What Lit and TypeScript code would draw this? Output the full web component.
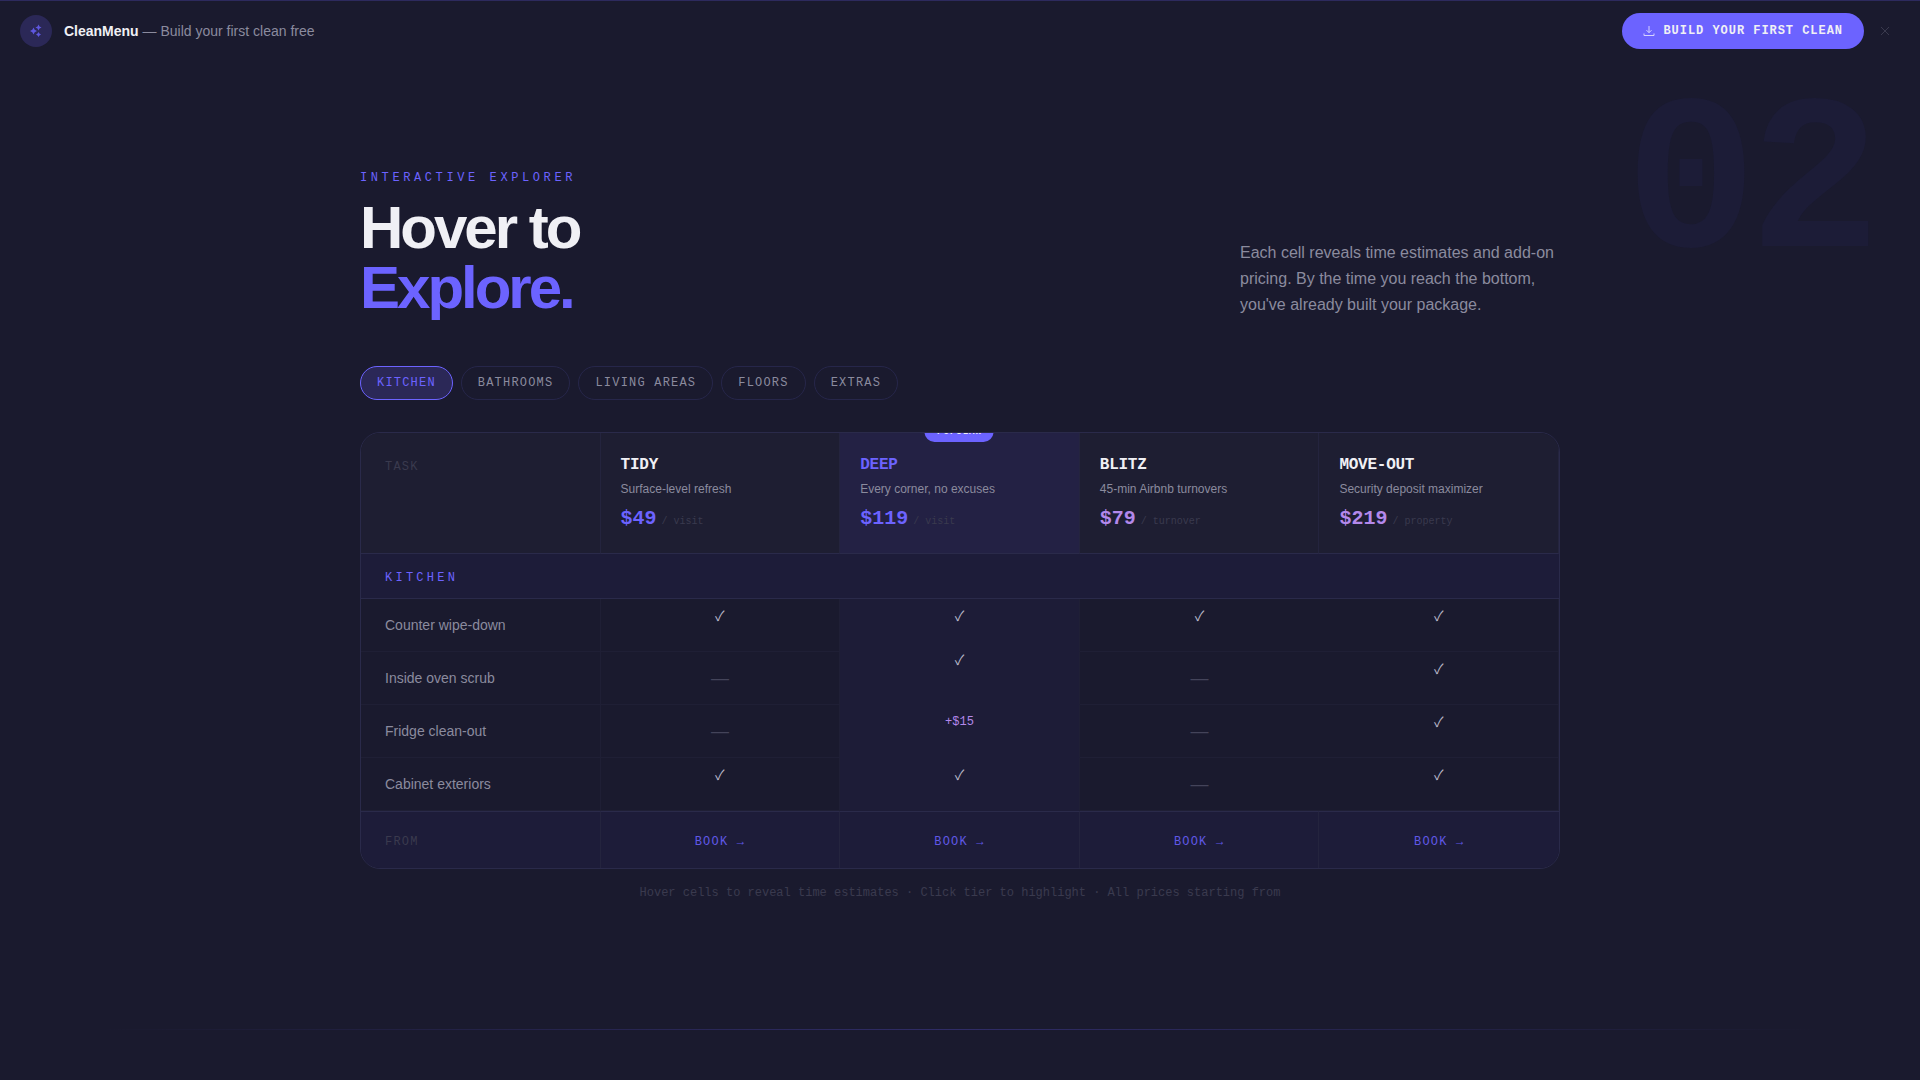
import { css, html, LitElement, nothing } from "lit";
import { customElement } from "lit/decorators.js";

type Mark = "yes" | "no" | string;

interface Tier {
  name: string;
  blurb: string;
  price: string;
  unit: string;
  lilac?: boolean;
  featured?: boolean;
}

const TIERS: Tier[] = [
  { name: "TIDY", blurb: "Surface-level refresh", price: "$49", unit: "/ visit" },
  { name: "DEEP", blurb: "Every corner, no excuses", price: "$119", unit: "/ visit", featured: true },
  { name: "BLITZ", blurb: "45-min Airbnb turnovers", price: "$79", unit: "/ turnover", lilac: true },
  { name: "MOVE-OUT", blurb: "Security deposit maximizer", price: "$219", unit: "/ property", lilac: true },
];

const ROWS: { task: string; marks: Mark[] }[] = [
  { task: "Counter wipe-down", marks: ["yes", "yes", "yes", "yes"] },
  { task: "Inside oven scrub", marks: ["no", "yes", "no", "yes"] },
  { task: "Fridge clean-out", marks: ["no", "+$15", "no", "yes"] },
  { task: "Cabinet exteriors", marks: ["yes", "yes", "no", "yes"] },
];

const TABS = ["KITCHEN", "BATHROOMS", "LIVING AREAS", "FLOORS", "EXTRAS"];

@customElement("app-root")
export class AppRoot extends LitElement {
  static override properties = {
    activeTab: { state: true },
  };

  declare activeTab: string;

  constructor() {
    super();
    this.activeTab = "KITCHEN";
  }

  static override styles = css`
    :host {
      display: block;
      position: relative;
      min-height: 1080px;
      overflow: hidden;
      background: #1a1a2e;
      color: #f0f0f5;
      font-family: "Liberation Sans", Arial, sans-serif;
    }

    .mono {
      font-family: "Liberation Mono", "Courier New", monospace;
    }

    .banner {
      position: relative;
      display: flex;
      align-items: center;
      height: 61px;
      padding: 0 20px;
      box-sizing: border-box;
      border-top: 1px solid #2d2a5e;
    }

    .logo {
      display: flex;
      align-items: center;
      justify-content: center;
      width: 32px;
      height: 32px;
      margin-right: 12px;
      border-radius: 50%;
      background: #2b2857;
      color: #5f57e0;
    }

    .logo svg {
      width: 16px;
      height: 16px;
      fill: currentColor;
    }

    .banner-text {
      flex: 1;
      font-size: 14px;
      color: #8b8b9e;
    }

    .banner-text b {
      color: #f0f0f5;
      font-weight: 700;
    }

    .cta {
      display: flex;
      align-items: center;
      gap: 8px;
      height: 36px;
      padding: 0 21px;
      border: none;
      border-radius: 18px;
      background: #6c63ff;
      color: #f0f0f5;
      font-size: 12px;
      font-weight: 700;
      letter-spacing: 0.08em;
      margin-right: 15px;
    }

    .cta svg {
      width: 12px;
      height: 12px;
      fill: none;
      stroke: #d5d2ff;
      stroke-width: 1;
    }

    .close {
      width: 12px;
      height: 12px;
      fill: none;
      stroke: #3a3a4e;
      stroke-width: 1;
      margin-right: 9px;
    }

    .ghost {
      position: absolute;
      top: 78px;
      right: 47px;
      font-size: 220px;
      line-height: 220px;
      font-weight: 700;
      letter-spacing: -8px;
      color: #1c1c37;
    }

    main {
      position: relative;
      width: 1200px;
      margin: 0 auto;
      padding-top: 110px;
    }

    .intro {
      display: flex;
      justify-content: space-between;
      align-items: flex-end;
    }

    .eyebrow {
      font-size: 12px;
      line-height: 14px;
      letter-spacing: 0.3em;
      color: #6c63ff;
      margin-bottom: 13px;
    }

    h1 {
      margin: 0;
      font-size: 60px;
      line-height: 60px;
      font-weight: 700;
      letter-spacing: -0.05em;
      color: #f0f0f5;
    }

    h1 span {
      display: block;
      color: #6c63ff;
    }

    .lede {
      width: 320px;
      margin: 0;
      font-size: 16px;
      line-height: 26px;
      color: #8b8b9e;
    }

    .tabs {
      display: flex;
      gap: 8px;
      margin: 48px 0 32px;
    }

    .tab {
      height: 34px;
      padding: 0 16px;
      border: 1px solid #26264a;
      border-radius: 17px;
      background: transparent;
      color: #8b8b9e;
      font-size: 12px;
      letter-spacing: 0.1em;
    }

    .tab.on {
      border-color: #6c63ff;
      background: #2b2857;
      color: #6c63ff;
    }

    .matrix {
      display: grid;
      grid-template-columns: repeat(5, 1fr);
      grid-template-rows: 121px 45px repeat(4, 53px) 57px;
      border: 1px solid #2a2a4a;
      border-radius: 20px;
      overflow: hidden;
    }

    .head {
      position: relative;
      padding: 23px 20px 0;
      background: #1e1e32;
      border-right: 1px solid #24243e;
      border-bottom: 1px solid #2a2a4a;
      min-width: 0;
    }

    .head.first {
      padding: 27px 24px 0;
      font-size: 12px;
      line-height: 14px;
      letter-spacing: 0.1em;
      color: #3a3a4e;
    }

    .head.featured {
      background: #232144;
    }

    .head:last-of-type {
      border-right: none;
    }

    .badge {
      position: absolute;
      top: -12px;
      left: 50%;
      transform: translateX(-50%);
      width: 69px;
      height: 21px;
      border-radius: 0 0 10px 10px;
      background: #6c63ff;
      color: #f0f0f5;
      font-size: 9px;
      line-height: 22px;
      font-weight: 700;
      letter-spacing: 1px;
      text-align: center;
    }

    .tier-name {
      font-size: 16px;
      line-height: 18px;
      font-weight: 700;
      letter-spacing: -0.25px;
      color: #f0f0f5;
    }

    .featured .tier-name {
      color: #6c63ff;
    }

    .blurb {
      margin-top: 7px;
      font-size: 12px;
      line-height: 16px;
      color: #8b8b9e;
    }

    .price-line {
      display: flex;
      align-items: baseline;
      gap: 5px;
      margin-top: 9px;
    }

    .price {
      font-size: 20px;
      line-height: 26px;
      font-weight: 700;
      color: #6c63ff;
    }

    .lilac .price {
      color: #b388eb;
    }

    .unit {
      font-size: 10px;
      color: #3a3a4e;
    }

    .section {
      grid-column: 1 / -1;
      display: flex;
      align-items: center;
      padding: 3px 24px 0;
      background: #1d1c39;
      border-bottom: 1px solid #2a2a4a;
      font-size: 12px;
      letter-spacing: 0.27em;
      color: #6c63ff;
    }

    .task {
      display: flex;
      align-items: center;
      padding: 0 24px;
      font-size: 14px;
      color: #8b8b9e;
      border-right: 1px solid #1f1f35;
      border-bottom: 1px solid #1f1f35;
    }

    .cell {
      display: flex;
      flex-direction: column;
      align-items: center;
      border-right: 1px solid #1f1f35;
      border-bottom: 1px solid #1f1f35;
    }

    .cell.featured {
      background: #1d1c37;
      border-bottom-color: #1d1c37;
    }

    .cell:nth-child(5n) {
      border-right: none;
    }

    .check {
      height: 14px;
      margin-top: 9px;
      font-family: "Noto Sans CJK JP", sans-serif;
      font-size: 14px;
      line-height: 14px;
      color: #b8b8c8;
    }

    .check.early {
      margin-top: 0;
    }

    .dash {
      margin-top: 16px;
      font-size: 18px;
      line-height: 20px;
      color: #44445a;
    }

    .addon {
      margin-top: 10px;
      font-size: 12px;
      line-height: 14px;
      color: #b388eb;
    }

    .foot {
      display: flex;
      align-items: center;
      justify-content: center;
      padding-top: 3px;
      background: #1d1c39;
      border-top: 1px solid #2a2a4a;
      border-right: 1px solid #24243e;
      font-size: 12px;
      letter-spacing: 0.1em;
      color: #6058e6;
    }

    .foot.first {
      justify-content: flex-start;
      padding: 3px 24px 0;
      color: #3a3a4e;
    }

    .foot:last-child {
      border-right: none;
    }

    .note {
      margin-top: 17px;
      font-size: 12px;
      line-height: 14px;
      text-align: center;
      color: #3a3a4e;
    }

    .rule {
      position: absolute;
      left: 96px;
      right: 96px;
      top: 1029px;
      height: 1px;
      background: linear-gradient(90deg, transparent, #2f2c66, transparent);
    }
  `;

  private renderTier(tier: Tier) {
    const classes = `head ${tier.featured ? "featured" : ""} ${tier.lilac ? "lilac" : ""}`;
    return html`
      <div class="${classes}">
        ${tier.featured ? html`<div class="badge mono">POPULAR</div>` : nothing}
        <div class="tier-name mono">${tier.name}</div>
        <div class="blurb">${tier.blurb}</div>
        <div class="price-line">
          <span class="price mono">${tier.price}</span>
          <span class="unit mono">${tier.unit}</span>
        </div>
      </div>
    `;
  }

  private renderMark(mark: Mark, rowIndex: number, col: number) {
    if (mark === "yes") {
      const early = !!TIERS[col].featured && rowIndex === 1;
      return html`<span class="check ${early ? "early" : ""}">✓</span>`;
    }
    if (mark === "no") return html`<span class="dash">—</span>`;
    return html`<span class="addon mono">${mark}</span>`;
  }

  override render() {
    return html`
      <div class="banner">
        <div class="logo">
          <svg viewBox="0 0 16 16">
            <path d="M5.5 4.5l1.2 2.3 2.3 1.2-2.3 1.2-1.2 2.3-1.2-2.3L2 8l2.3-1.2z"></path>
            <path d="M10.5 1.5l1 2 2 1-2 1-1 2-1-2-2-1 2-1z"></path>
            <path d="M10.5 9l.9 1.6 1.6.9-1.6.9-.9 1.6-.9-1.6-1.6-.9 1.6-.9z"></path>
          </svg>
        </div>
        <div class="banner-text"><b>CleanMenu</b> — Build your first clean free</div>
        <button class="cta mono">
          <svg viewBox="0 0 12 12">
            <path d="M6 1v6.5M3.5 5.2 6 7.7l2.5-2.5M1 8.5v2h10v-2"></path>
          </svg>
          BUILD YOUR FIRST CLEAN
        </button>
        <svg class="close" viewBox="0 0 12 12"><path d="M2 2l8 8M10 2l-8 8"></path></svg>
      </div>

      <div class="ghost mono">02</div>

      <main>
        <div class="intro">
          <div>
            <div class="eyebrow mono">INTERACTIVE EXPLORER</div>
            <h1>Hover to<span>Explore.</span></h1>
          </div>
          <p class="lede">
            Each cell reveals time estimates and add-on pricing. By the time you reach the bottom,
            you've already built your package.
          </p>
        </div>

        <div class="tabs">
          ${TABS.map(
            (tab) => html`
              <button
                class="tab mono ${tab === this.activeTab ? "on" : ""}"
                @click="${() => (this.activeTab = tab)}"
              >
                ${tab}
              </button>
            `,
          )}
        </div>

        <div class="matrix">
          <div class="head first mono">TASK</div>
          ${TIERS.map((tier) => this.renderTier(tier))}
          <div class="section mono">KITCHEN</div>
          ${ROWS.map(
            (row, rowIndex) => html`
              <div class="task">${row.task}</div>
              ${row.marks.map(
                (mark, i) => html`
                  <div class="cell ${TIERS[i].featured ? "featured" : ""}">
                    ${this.renderMark(mark, rowIndex, i)}
                  </div>
                `,
              )}
            `,
          )}
          <div class="foot first mono">FROM</div>
          ${TIERS.map(() => html`<div class="foot mono">BOOK →</div>`)}
        </div>

        <div class="note mono">
          Hover cells to reveal time estimates · Click tier to highlight · All prices starting from
        </div>
      </main>

      <div class="rule"></div>
    `;
  }
}

declare global {
  interface HTMLElementTagNameMap {
    "app-root": AppRoot;
  }
}
